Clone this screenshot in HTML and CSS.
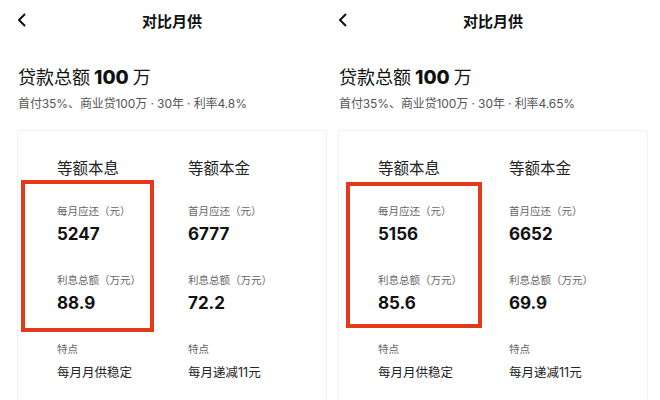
FILE: index.html
```html
<!DOCTYPE html>
<html lang="zh-CN">
<head>
<meta charset="utf-8">
<title>对比月供</title>
<link rel="stylesheet" href="styles.css">
</head>
<body>
<div class="page">
  <section class="panel panel-left">
    <header class="nav">
      <svg class="back" width="10" height="14" viewBox="0 0 10 14"><path d="M7.5 1.5 L2 7 L7.5 12.5" fill="none" stroke="#111" stroke-width="2" stroke-linecap="round" stroke-linejoin="round"/></svg>
      <h1 class="nav-title">对比月供</h1>
    </header>
    <h2 class="total">贷款总额 <b>100</b> 万</h2>
    <p class="sub">首付35%、商业贷100万 · 30年 · 利率4.8%</p>
    <div class="card">
      <div class="col">
        <div class="col-title">等额本息</div>
        <div class="label">每月应还（元）</div>
        <div class="value">5247</div>
        <div class="label l2">利息总额（万元）</div>
        <div class="value">88.9</div>
        <div class="label l3">特点</div>
        <div class="feat">每月月供稳定</div>
      </div>
      <div class="col">
        <div class="col-title">等额本金</div>
        <div class="label">首月应还（元）</div>
        <div class="value">6777</div>
        <div class="label l2">利息总额（万元）</div>
        <div class="value">72.2</div>
        <div class="label l3">特点</div>
        <div class="feat">每月递减11元</div>
      </div>
    </div>
    <div class="mark mark-left"></div>
  </section>
  <section class="panel panel-right">
    <header class="nav">
      <svg class="back" width="10" height="14" viewBox="0 0 10 14"><path d="M7.5 1.5 L2 7 L7.5 12.5" fill="none" stroke="#111" stroke-width="2" stroke-linecap="round" stroke-linejoin="round"/></svg>
      <h1 class="nav-title">对比月供</h1>
    </header>
    <h2 class="total">贷款总额 <b>100</b> 万</h2>
    <p class="sub">首付35%、商业贷100万 · 30年 · 利率4.65%</p>
    <div class="card">
      <div class="col">
        <div class="col-title">等额本息</div>
        <div class="label">每月应还（元）</div>
        <div class="value">5156</div>
        <div class="label l2">利息总额（万元）</div>
        <div class="value">85.6</div>
        <div class="label l3">特点</div>
        <div class="feat">每月月供稳定</div>
      </div>
      <div class="col">
        <div class="col-title">等额本金</div>
        <div class="label">首月应还（元）</div>
        <div class="value">6652</div>
        <div class="label l2">利息总额（万元）</div>
        <div class="value">69.9</div>
        <div class="label l3">特点</div>
        <div class="feat">每月递减11元</div>
      </div>
    </div>
    <div class="mark mark-right"></div>
  </section>
</div>
</body>
</html>
```
FILE: styles.css
```css
* { box-sizing: border-box; margin: 0; padding: 0; }
html, body { width: 660px; height: 400px; overflow: hidden; background: #fff; }
body {
  font-family: "Inter", "Noto Sans CJK SC", sans-serif;
  color: #111;
}
.page { display: flex; width: 660px; height: 400px; overflow: hidden; }
.panel { position: relative; width: 330px; height: 400px; flex: none; overflow: hidden; }
.panel-left { padding-left: 17px; }
.panel-right { padding-left: 8px; }

.nav {
  position: relative;
  width: 310px;
  height: 42px;
  display: flex;
  align-items: center;
  justify-content: center;
}
.back { position: absolute; left: 0; top: 13px; }
.nav-title {
  font-family: "Noto Sans CJK SC", sans-serif;
  font-size: 15px;
  font-weight: 700;
  line-height: 42px;
  color: #111;
}

.total {
  margin-top: 22px;
  padding-left: 1px;
  font-family: "Noto Sans CJK SC", sans-serif;
  font-size: 18px;
  font-weight: 400;
  line-height: 24px;
  color: #111;
}
.total b { font-family: "Inter", sans-serif; font-weight: 800; font-size: 19px; }

.sub {
  margin-top: 5px;
  padding-left: 1px;
  font-size: 12px;
  line-height: 18px;
  color: #555;
  letter-spacing: -0.1px;
}

.card {
  margin-top: 17px;
  width: 310px;
  height: 272px;
  border: 1px solid #f1f1f1;
  border-bottom: 0;
  border-radius: 3px 3px 0 0;
  padding: 25px 0 0 39px;
  display: grid;
  grid-template-columns: 131px 140px;
}
.col { display: flex; flex-direction: column; }
.col-title {
  font-family: "Noto Sans CJK SC", sans-serif;
  font-size: 15.5px;
  line-height: 22px;
  color: #222;
}
.label {
  margin-top: 25px;
  font-family: "Noto Sans CJK SC", sans-serif;
  font-size: 10.5px;
  line-height: 16px;
  color: #666;
}
.label.l2 { margin-top: 26px; }
.label.l3 { margin-top: 26px; }
.value {
  margin-top: 3px;
  font-family: "Inter", sans-serif;
  font-weight: 700;
  font-size: 17px;
  line-height: 24px;
  color: #111;
}
.feat {
  margin-top: 6px;
  font-family: "Inter", "Noto Sans CJK SC", sans-serif;
  font-size: 12.5px;
  line-height: 20px;
  color: #222;
}

.mark {
  position: absolute;
  border: 4px solid #e5391c;
}
.mark-left { left: 21px; top: 180px; width: 133px; height: 152px; }
.mark-right { left: 16px; top: 182px; width: 136px; height: 146px; }
```
